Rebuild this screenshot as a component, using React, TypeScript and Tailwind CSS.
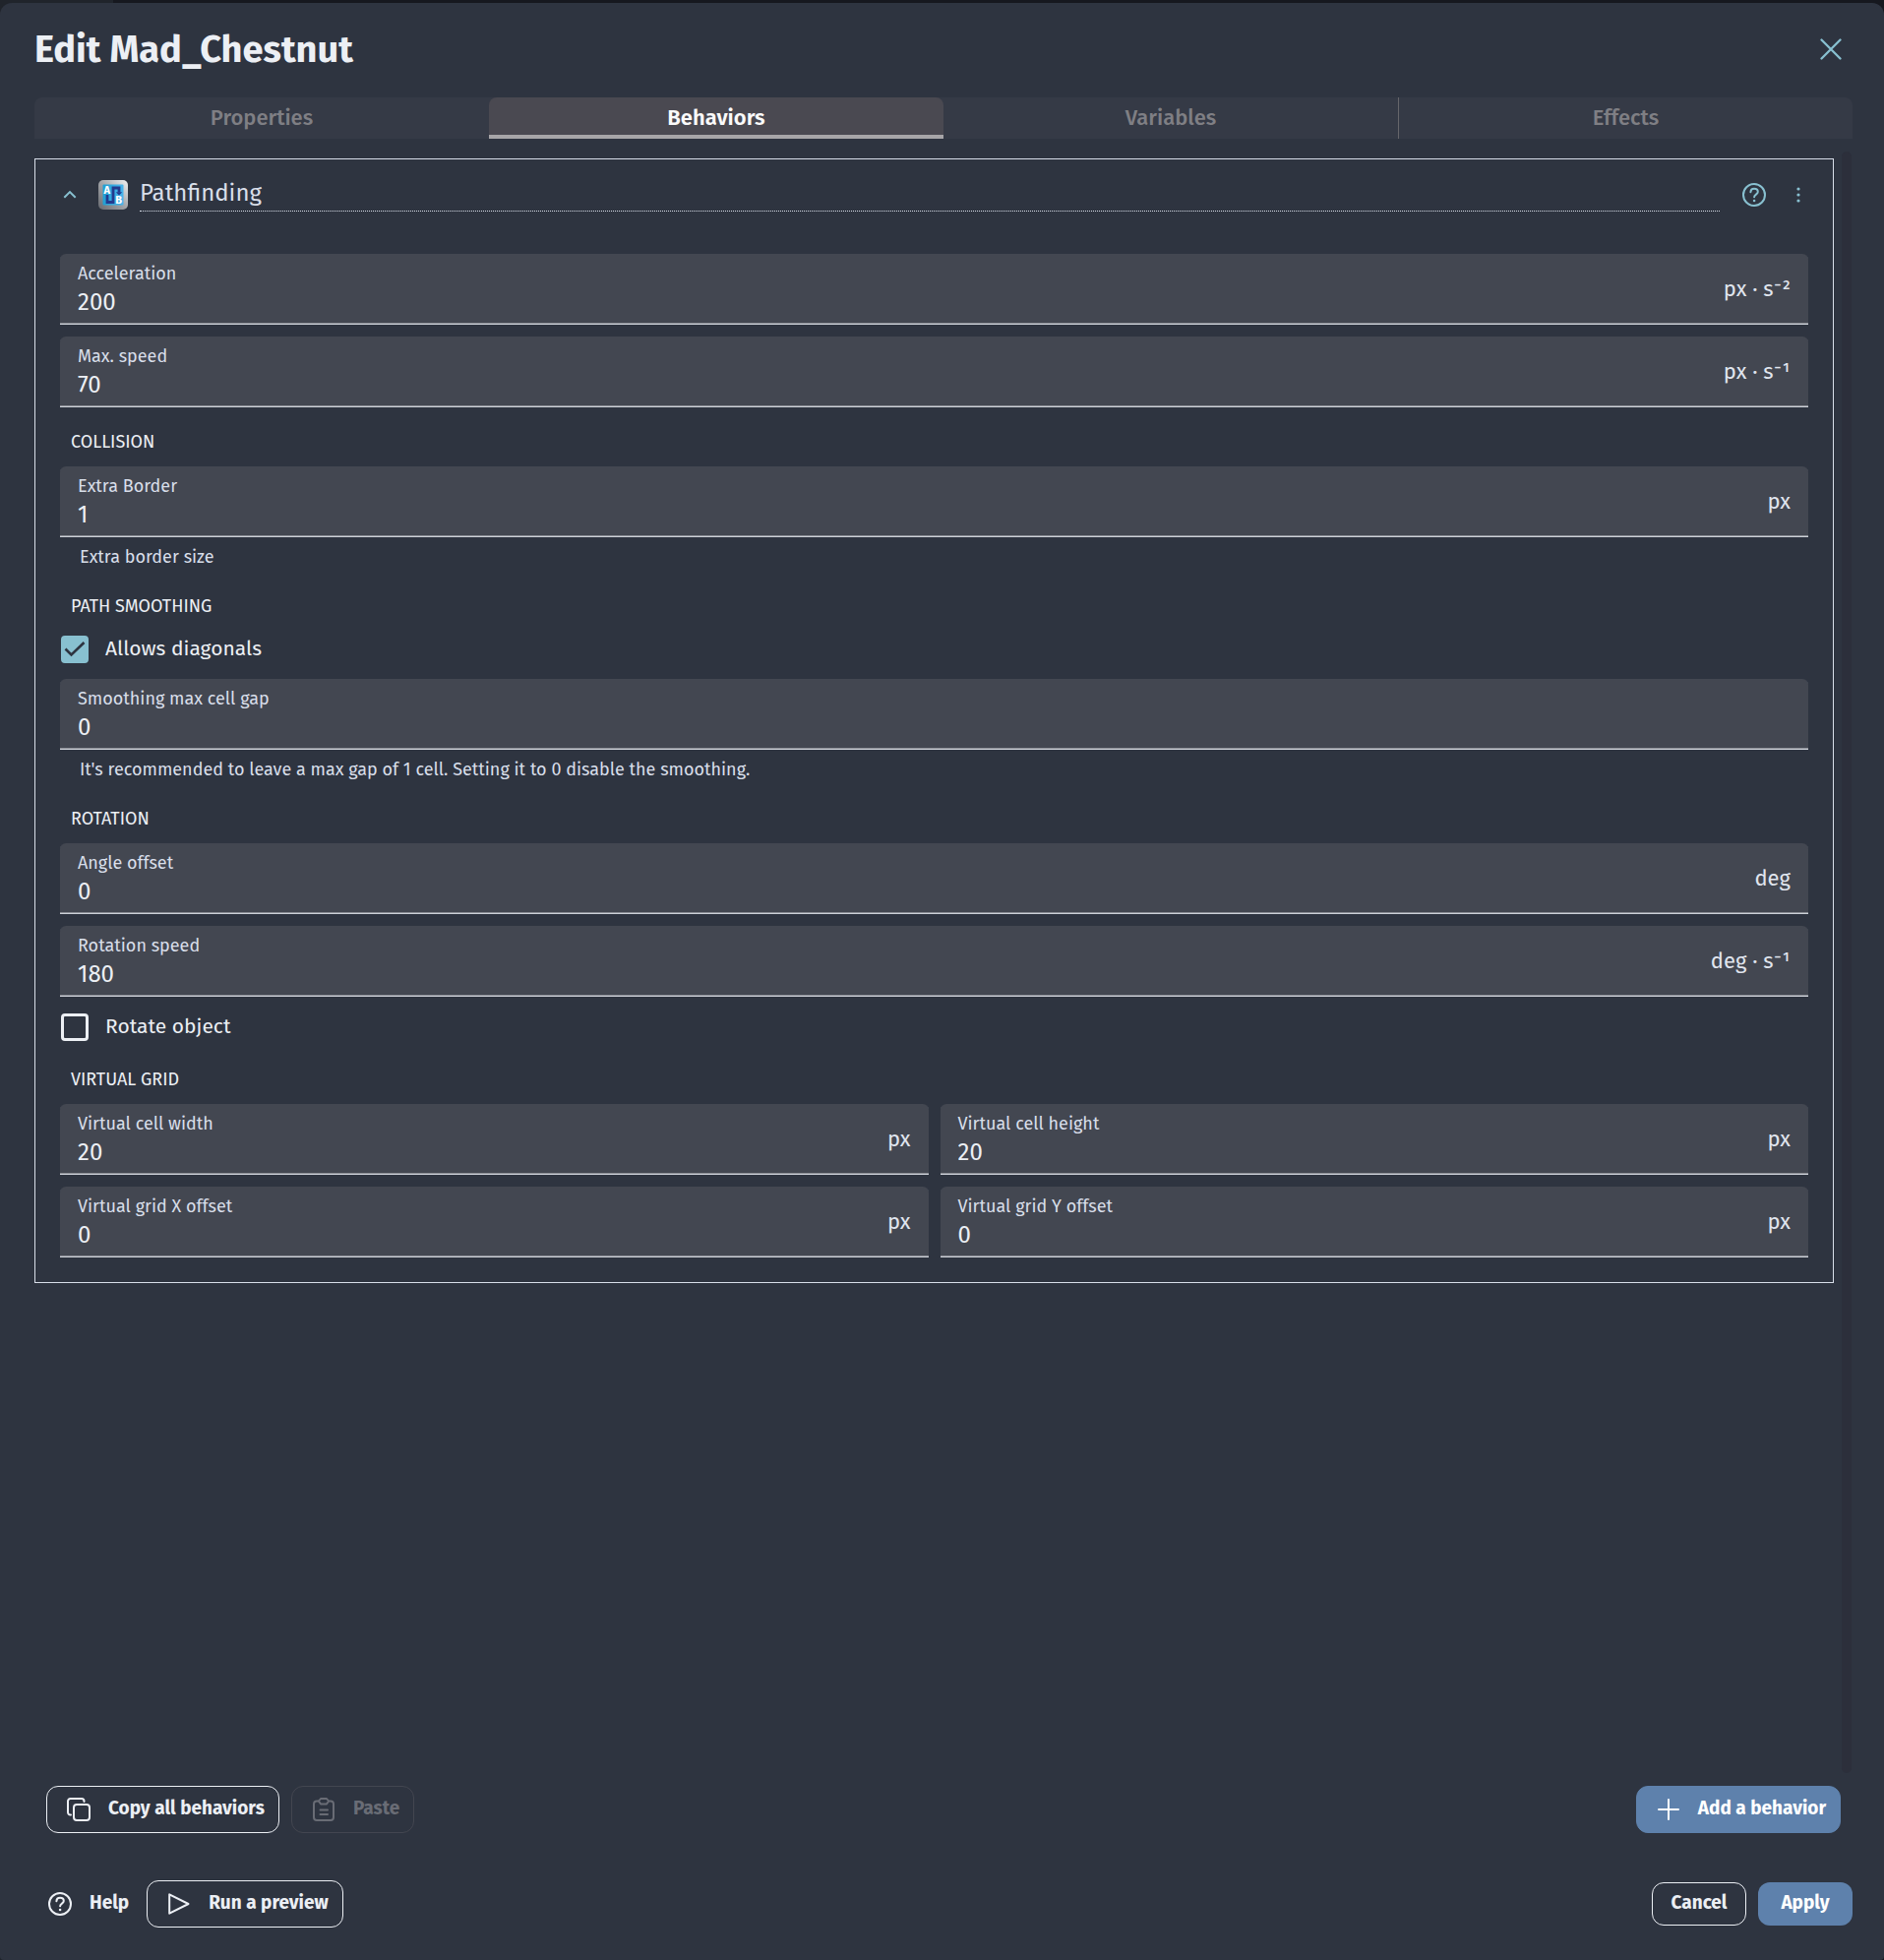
import { useState, type ReactNode } from "react";
import clsx from "clsx";

const TABS = ["Properties", "Behaviors", "Variables", "Effects"];

function HelpIcon() {
  return (
    <svg viewBox="0 0 24 24" className="size-6" fill="none" stroke="currentColor" strokeWidth="2" strokeLinecap="round">
      <circle cx="12" cy="12" r="11" />
      <path d="M8.4 9.2C8.5 7 10 5.8 12 5.8s3.8 1.2 3.8 3.2c0 2.5-3.7 2.7-3.7 5.2" />
      <circle cx="12.1" cy="18" r="1.3" fill="currentColor" stroke="none" />
    </svg>
  );
}

function CopyIcon() {
  return (
    <svg viewBox="0 0 24 24" className="size-6" fill="none" stroke="currentColor" strokeWidth="2" strokeLinecap="round">
      <rect x="7" y="7" width="16" height="16" rx="3" />
      <path d="M17.5 4V3.5A2.5 2.5 0 0 0 15 1H3.500A2.500 2.500 0 0 0 1 3.500V15a2.500 2.500 0 0 0 2.500 2.500H4" />
    </svg>
  );
}

function ClipboardIcon() {
  return (
    <svg viewBox="0 0 24 24" className="size-6" fill="none" stroke="currentColor" strokeWidth="2" strokeLinecap="round" strokeLinejoin="round">
      <path d="M7 3.500H5a3 3 0 0 0-3 3V20a3 3 0 0 0 3 3h14a3 3 0 0 0 3-3V6.500a3 3 0 0 0-3-3h-2" />
      <path d="M9 1h6l2 2.500L15 6.500H9L7 3.500z" />
      <path d="M8.500 12.500h7.500M8.500 17h7.500" />
    </svg>
  );
}

function PlayIcon() {
  return (
    <svg viewBox="0 0 24 24" className="size-6" fill="none" stroke="currentColor" strokeWidth="2" strokeLinejoin="round">
      <path d="M2.200 2.300v19.400L21.500 12z" />
    </svg>
  );
}

function PlusIcon() {
  return (
    <svg viewBox="0 0 24 24" className="size-6" fill="none" stroke="currentColor" strokeWidth="2" strokeLinecap="round">
      <path d="M12 2v20M2 12h20" />
    </svg>
  );
}

function PathfindingIcon() {
  return (
    <svg viewBox="0 0 30 30" className="size-[30px]">
      <defs>
        <linearGradient id="frame" x1="0" y1="1" x2="1" y2="0">
          <stop offset="0" stopColor="#66696f" />
          <stop offset="0.5" stopColor="#a3a5a9" />
          <stop offset="1" stopColor="#f2f2f3" />
        </linearGradient>
        <linearGradient id="tile" x1="0" y1="0" x2="1" y2="0">
          <stop offset="0" stopColor="#1f9fd3" />
          <stop offset="1" stopColor="#4ab4ec" />
        </linearGradient>
      </defs>
      <rect width="30" height="30" rx="5" fill="url(#frame)" />
      <rect x="4.500" y="4.500" width="21" height="21" rx="1" fill="url(#tile)" />
      <path d="M9 15v7.500h6V8h6v4.500" fill="none" stroke="#233a8e" strokeWidth="2.800" />
      <path d="M17.800 12.200h6.400L21 15.400z" fill="#233a8e" />
      <text x="5.500" y="13.600" fontSize="11" fontWeight="700" fill="#ffffff">A</text>
      <text x="17.300" y="24.300" fontSize="11" fontWeight="700" fill="#ffffff">B</text>
    </svg>
  );
}

function Field({ id, label, value, unit }: { id: string; label: string; value: string; unit?: string }) {
  return (
    <div className="flex items-center rounded-t-md border-b border-[#cdd1d8] bg-[#434751] px-[18px] shadow-[inset_0_-1px_0_#8b8e95]">
      <div className="flex min-w-0 flex-1 flex-col pt-2 pb-1.5">
        <label htmlFor={id} className="text-[18px] leading-6 text-[#d8dee9]">{label}</label>
        <input id={id} defaultValue={value} className="h-[33px] w-full bg-transparent pt-px text-2xl text-[#eceff4] outline-none" />
      </div>
      {unit && <span className="text-[22px] leading-8 text-[#e0e5ee]">{unit}</span>}
    </div>
  );
}

function SectionTitle({ children }: { children: ReactNode }) {
  return <h2 className="pt-[11px] pb-px pl-[11px] text-[18px] leading-6 text-[#eceff4] uppercase">{children}</h2>;
}

function Hint({ children }: { children: ReactNode }) {
  return <p className="pt-2 pb-[3px] pl-5 text-[18px] leading-6 text-[#d8dee9]">{children}</p>;
}

function CheckRow({ label, defaultChecked }: { label: string; defaultChecked?: boolean }) {
  return (
    <label className="flex h-[37px] items-center gap-[17px] pl-px text-[21px] text-[#eceff4]">
      <span className="relative flex size-7">
        <input
          type="checkbox"
          defaultChecked={defaultChecked}
          className="peer size-7 appearance-none rounded-sm border-3 border-[#eceff4] checked:border-[#88c0d0] checked:bg-[#88c0d0]"
        />
        <svg
          viewBox="0 0 28 28"
          className="pointer-events-none absolute inset-0 hidden size-7 peer-checked:block"
          fill="none"
          stroke="#2e3440"
          strokeWidth="2.600"
        >
          <path d="M4.500 13.500l6 6L23.500 7" />
        </svg>
      </span>
      {label}
    </label>
  );
}

const outlined = "flex h-12 items-center gap-[18px] rounded-xl border pr-3.5 pl-5";

export default function App() {
  const [tab, setTab] = useState("Behaviors");

  return (
    <div className="flex min-h-screen flex-col bg-[linear-gradient(90deg,#20242b_115px,#16181f_115px)] pt-[3px] font-['Fira_Sans','Noto_Sans',sans-serif]">
      <div className="flex flex-1 flex-col rounded-t-xl rounded-b-sm bg-[#2e3440] pr-8 pb-[33px] pl-[35px]">
        <header className="flex h-24 items-center justify-between pb-0.5">
          <h1 className="text-[38px] font-bold text-[#eceff4]">Edit Mad_Chestnut</h1>
          <button aria-label="Close" className="flex size-11 items-center justify-center text-[#88c0d0]">
            <svg viewBox="0 0 22 22" className="size-[22px]" fill="none" stroke="currentColor" strokeWidth="2.300" strokeLinecap="round">
              <path d="M1.500 1.500l19 19M20.500 1.500l-19 19" />
            </svg>
          </button>
        </header>

        {/* Tabs */}
        <div role="tablist" className="grid grid-cols-4 rounded-t-lg bg-[#353a46]">
          {TABS.map((name) => (
            <button
              key={name}
              role="tab"
              aria-selected={tab === name}
              onClick={() => setTab(name)}
              className={clsx(
                "h-[42px] text-[22px] leading-8",
                tab === name
                  ? "rounded-t-lg border-b-4 border-[#a7a5a8] bg-[#4a4951] pt-1 font-semibold text-[#fafafa]"
                  : "border-[#66666b] font-medium text-[#7f7f84] last:border-l"
              )}
            >
              {name}
            </button>
          ))}
        </div>

        {/* Behavior list */}
        <div className="mt-[13px] flex flex-1 gap-2 pr-px">
          <div className="min-w-0 flex-1 pt-[7px]">
            <section className="border border-[#d8dee9]">
              <div className="flex h-[72px] items-center pr-3.5 pl-[11px]">
                <button aria-label="Collapse" className="flex size-12 items-center justify-center text-[#88c0d0]">
                  <svg viewBox="0 0 14 14" className="size-3.5" fill="none" stroke="currentColor" strokeWidth="2">
                    <path d="M1.300 9.700L7 4.100l5.700 5.600" />
                  </svg>
                </button>
                <div className="mr-3 ml-[5px]">
                  <PathfindingIcon />
                </div>
                <input
                  aria-label="Behavior name"
                  defaultValue="Pathfinding"
                  className="h-[34px] min-w-0 flex-1 border-b border-dotted border-[#d8dee9] bg-transparent pb-1 text-2xl text-[#d8dee9] outline-none"
                />
                <button aria-label="Behavior help" className="ml-[11px] flex size-12 items-center justify-center text-[#88c0d0]">
                  <HelpIcon />
                </button>
                <button aria-label="More options" className="flex h-12 w-[42px] items-center justify-center text-[#88c0d0]">
                  <svg viewBox="0 0 16 16" className="size-4" fill="currentColor">
                    <circle cx="8" cy="2" r="1.600" />
                    <circle cx="8" cy="8" r="1.600" />
                    <circle cx="8" cy="14" r="1.600" />
                  </svg>
                </button>
              </div>

              <div className="flex flex-col gap-3 px-[25px] pt-6 pb-[25px]">
                <Field id="acceleration" label="Acceleration" value="200" unit="px · s⁻²" />
                <Field id="max-speed" label="Max. speed" value="70" unit="px · s⁻¹" />

                <SectionTitle>Collision</SectionTitle>
                <div>
                  <Field id="extra-border" label="Extra Border" value="1" unit="px" />
                  <Hint>Extra border size</Hint>
                </div>

                <SectionTitle>Path smoothing</SectionTitle>
                <CheckRow label="Allows diagonals" defaultChecked />
                <div>
                  <Field id="cell-gap" label="Smoothing max cell gap" value="0" />
                  <Hint>It's recommended to leave a max gap of 1 cell. Setting it to 0 disable the smoothing.</Hint>
                </div>

                <SectionTitle>Rotation</SectionTitle>
                <Field id="angle-offset" label="Angle offset" value="0" unit="deg" />
                <Field id="rotation-speed" label="Rotation speed" value="180" unit="deg · s⁻¹" />
                <CheckRow label="Rotate object" />

                <SectionTitle>Virtual grid</SectionTitle>
                <div className="grid grid-cols-2 gap-3">
                  <Field id="cell-width" label="Virtual cell width" value="20" unit="px" />
                  <Field id="cell-height" label="Virtual cell height" value="20" unit="px" />
                  <Field id="grid-x" label="Virtual grid X offset" value="0" unit="px" />
                  <Field id="grid-y" label="Virtual grid Y offset" value="0" unit="px" />
                </div>
              </div>
            </section>
          </div>
          {/* Scrollbar track */}
          <div className="w-2.5 rounded-full bg-[#2c2f3b]" />
        </div>

        <div className="mt-[13px] flex items-center gap-3 px-3 text-[19px] font-bold">
          <button className={clsx(outlined, "border-[#eceff4] text-[#eceff4]")}>
            <CopyIcon />
            <span className="pb-0.5">Copy all behaviors</span>
          </button>
          <button disabled className={clsx(outlined, "border-[#434650] text-[#696c75]")}>
            <ClipboardIcon />
            <span className="pb-0.5">Paste</span>
          </button>
          <button className={clsx(outlined, "ml-auto border-[#5e81ac] bg-[#5e81ac] text-white")}>
            <PlusIcon />
            <span className="pb-0.5">Add a behavior</span>
          </button>
        </div>

        <footer className="mt-12 flex items-center text-[19px] font-bold text-[#eceff4]">
          <button className="flex h-12 items-center gap-[18px] pr-[18px] pl-3.5">
            <HelpIcon />
            <span className="pb-0.5">Help</span>
          </button>
          <button className={clsx(outlined, "border-[#eceff4]")}>
            <PlayIcon />
            <span className="pb-0.5">Run a preview</span>
          </button>
          <button className="mr-3 ml-auto h-11 w-24 rounded-xl border border-[#eceff4] pb-0.5">Cancel</button>
          <button className="h-11 w-24 rounded-xl bg-[#5e81ac] pb-0.5 text-white">Apply</button>
        </footer>
      </div>
    </div>
  );
}
